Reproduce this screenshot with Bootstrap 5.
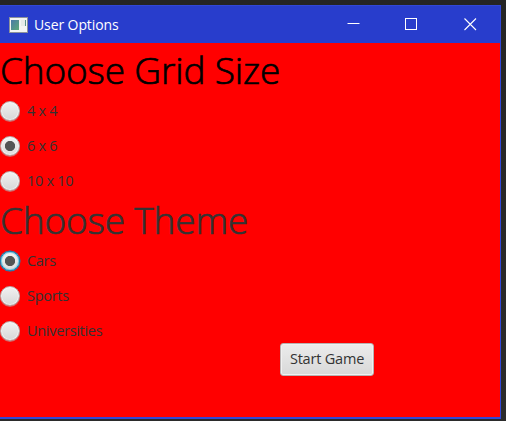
<!DOCTYPE html>
<html lang="en">
<head>
<meta charset="utf-8">
<meta name="viewport" content="width=device-width, initial-scale=1">
<title>User Options</title>
<link href="https://cdn.jsdelivr.net/npm/bootstrap@5.3.0/dist/css/bootstrap.min.css" rel="stylesheet">
<style>
body{width:506px;height:421px;background:linear-gradient(#252525,#2b2b2b);font-family:"Segoe UI","Open Sans","Noto Sans",sans-serif;font-size:14.5px;line-height:20px;color:#333}
.window{width:501px;height:414px;margin-top:5px;background:#f00;border:solid #3148d8;border-width:1px 1px 2px 0}
.titlebar{height:37px;background:#283dcc;color:#fff;padding-left:9px}
.title-text{font-size:14px;letter-spacing:-.1px;margin-left:6px}
.win-btn{width:58.5px;height:37px}
.options{padding-top:6px}
.heading{height:45px;line-height:41px;font-size:37px;font-weight:300;letter-spacing:-.15px;margin:0;white-space:nowrap;-webkit-text-stroke:.7px currentColor}
.option{height:35px;padding-top:7px;gap:7.5px;letter-spacing:-.3px}
.option span{margin-left:-.5px}
.dot{width:20px;height:20px;border-radius:50%;margin:0;appearance:none;flex:none;border:1px solid #b9aeae;background:linear-gradient(#f1f1f1,#d7d7d7);box-shadow:inset 0 0 0 1px rgba(255,255,255,.55),0 1px 0 rgba(190,150,150,.65)}
.dot:checked{background:radial-gradient(circle,#555 4.7px,transparent 5.5px),linear-gradient(#f3f3f3,#dedede)}
.dot.active{border-color:#0793c8;box-shadow:inset 0 0 0 1px #8fcee5,0 0 0 .5px #0793c8}
.start{width:94px;height:33px;margin:-6px 0 0 280px;padding:0 0 1px;font-size:14.5px;line-height:20px;letter-spacing:-.2px;color:#333;border:1px solid #b8b3b3;border-radius:3px;background:linear-gradient(#ececec,#d8d8d8);box-shadow:inset 0 0 0 1px #f1f1f1}
</style>
<script src="https://cdn.jsdelivr.net/npm/bootstrap@5.3.0/dist/js/bootstrap.bundle.min.js"></script>
</head>
<body class="overflow-hidden d-flex">
<main class="window">
  <header class="titlebar d-flex align-items-center">
    <svg width="19" height="16" viewBox="0 0 19 16"><defs><linearGradient id="g" x2="1" y2="1"><stop stop-color="#4b79a8"/><stop offset="1" stop-color="#5da978"/></linearGradient></defs><path d="M0 0h19v16H0z" fill="#8d929b"/><path d="M1 1h17v14H1z" fill="#f4f5f3"/><path d="M2 3h8v10H2z" fill="url(#g)"/><path d="M12 3h5v6h-5z" fill="#e6ebe8"/><path d="M16 3h1v6h-1z" fill="#5a9188"/></svg>
    <span class="title-text">User Options</span>
    <div class="d-flex ms-auto">
      <svg class="win-btn" viewBox="0 0 58.5 37"><path d="M22.5 17.5h12" stroke="#fff"/></svg>
      <svg class="win-btn" viewBox="0 0 58.5 37"><path d="M22.5 12.5h11v11h-11z" fill="none" stroke="#fff" shape-rendering="crispEdges"/></svg>
      <svg class="win-btn" viewBox="0 0 58.5 37"><path d="M22.5 12.5L34 24m0-11.5L22.5 24" stroke="#fff" stroke-width="1.1"/></svg>
    </div>
  </header>
  <form class="options">
    <div class="d-flex flex-column">
    <h1 class="heading text-black">Choose Grid Size</h1>
    <label class="option d-flex"><input class="dot" type="radio" name="size"><span>4 x 4</span></label>
    <label class="option d-flex"><input class="dot" type="radio" name="size" checked><span>6 x 6</span></label>
    <label class="option d-flex"><input class="dot" type="radio" name="size"><span>10 x 10</span></label>
    <h1 class="heading">Choose Theme</h1>
    <label class="option d-flex"><input class="dot active" type="radio" name="theme" checked><span>Cars</span></label>
    <label class="option d-flex"><input class="dot" type="radio" name="theme"><span>Sports</span></label>
    <label class="option d-flex"><input class="dot" type="radio" name="theme"><span>Universities</span></label>
    </div>
    <button class="btn start d-block" type="button">Start Game</button>
  </form>
</main>
</body>
</html>
